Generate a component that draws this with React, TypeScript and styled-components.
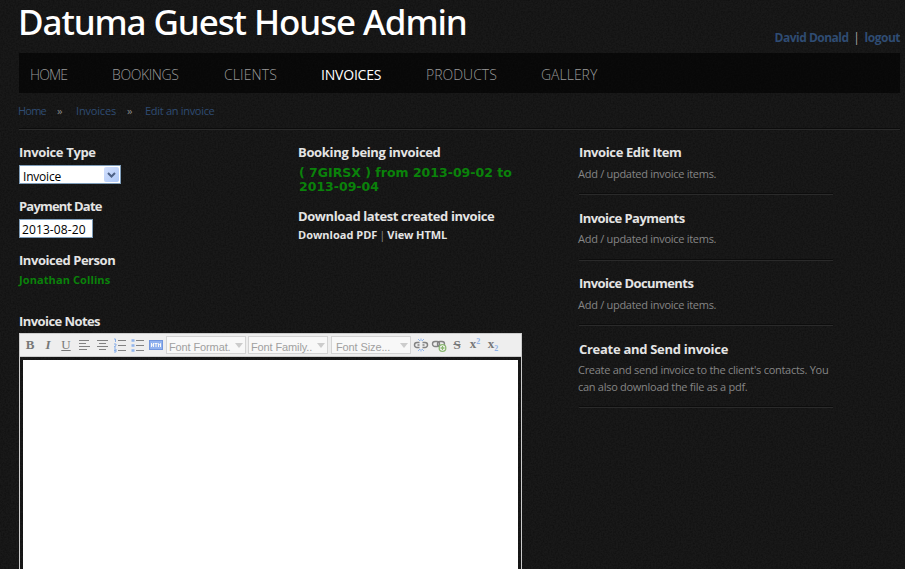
import React from "react";
import styled, { createGlobalStyle } from "styled-components";

const grain = (id: number, alpha: number) =>
  `url("data:image/svg+xml,${encodeURIComponent(
    `<svg xmlns='http://www.w3.org/2000/svg' width='200' height='200'><filter id='n' x='0' y='0' width='100%' height='100%'><feTurbulence type='fractalNoise' baseFrequency='0.6' numOctaves='2' seed='${id}' stitchTiles='stitch'/><feColorMatrix values='0 0 0 0 0  0 0 0 0 0  0 0 0 0 0  1.6 0 0 0 -0.55'/></filter><rect width='200' height='200' filter='url(#n)' opacity='${alpha}'/></svg>`
  )}")`;

const GlobalStyle = createGlobalStyle`
  * { box-sizing: border-box; }
  html, body { margin: 0; height: 100%; overflow: hidden; }
  body {
    background: #191919 ${grain(4, 0.4)};
    color: #888;
    font: 11px/17px "Open Sans", "Noto Sans", sans-serif;
  }
`;

const Page = styled.div`
  width: 881px;
  margin-left: 19px;
`;

const Header = styled.header`
  display: flex;
  justify-content: space-between;
  height: 53px;
`;

const Title = styled.h1`
  margin: 0 0 0 -1px;
  font-family: "Noto Sans", sans-serif;
  font-size: 35px;
  font-weight: 500;
  line-height: 44px;
  letter-spacing: -1.1px;
  color: #fff;
  white-space: nowrap;
`;

const Account = styled.div`
  display: flex;
  padding-top: 28px;
  font-size: 12px;
  line-height: 20px;
`;

const Divider = styled.span`
  width: 16px;
  text-align: center;
  color: #aaa;
`;

const AccountLink = styled.a<{ $ls?: number }>`
  font-weight: bold;
  letter-spacing: ${(p) => p.$ls ?? 0}px;
  color: #2f4c73;
  white-space: nowrap;
`;

const Nav = styled.nav`
  display: grid;
  grid-template-columns: 82px 112px 97px 105px 115px auto;
  height: 40px;
  padding: 4px 0 0 11px;
  background: rgba(0, 0, 0, 0.6);
`;

const NavItem = styled.a<{ $active?: boolean; $ls?: number }>`
  font-size: 14px;
  font-weight: ${(p) => (p.$active ? 400 : 300)};
  line-height: 36px;
  letter-spacing: ${(p) => p.$ls ?? 0}px;
  color: ${(p) => (p.$active ? "#fff" : "#999")};
`;

const Breadcrumb = styled.div`
  display: grid;
  grid-template-columns: 38px 19px 51px 19px auto;
  height: 37px;
  line-height: 35px;
  border-bottom: 1px solid #2a2a2a;
  box-shadow: inset 0 -1px #0c0c0c;
`;

const Crumb = styled.a<{ $ls?: number; $ml?: number }>`
  margin-left: ${(p) => p.$ml ?? 0}px;
  color: #2f4c73;
  letter-spacing: ${(p) => p.$ls ?? 0}px;
  white-space: nowrap;
`;

const Main = styled.main`
  display: grid;
  grid-template-columns: 279px 281px 254px;
  grid-template-rows: 178px auto;
`;

const Column = styled.section`
  padding-top: 13px;
`;

const Heading = styled.h2<{ $ls?: number }>`
  margin: 0;
  font-size: 13px;
  line-height: 18px;
  letter-spacing: ${(p) => p.$ls ?? -0.5}px;
  color: #e4e4e4;
  white-space: nowrap;
`;

const Field = styled.div`
  height: 54px;
`;

const SelectBox = styled.div`
  display: flex;
  justify-content: space-between;
  width: 102px;
  height: 19px;
  margin-top: 4px;
  padding: 1px 1px 1px 3px;
  border: 1px solid #7f9db9;
  background: #fff;
  color: #000;
  font: 12px/19px "Open Sans", sans-serif;
  letter-spacing: -0.2px;
`;

const Arrow = styled.span`
  display: grid;
  place-items: center;
  width: 15px;
  height: 15px;
  border-radius: 2px;
  background: linear-gradient(135deg, #d3e0fd, #aec8f7);
`;

const DateInput = styled.input`
  display: block;
  width: 74px;
  height: 19px;
  margin-top: 4px;
  padding: 2px 0 0 2px;
  border: 1px solid #7f9db9;
  background: #fff;
  color: #000;
  font: 12px/16px "Open Sans", sans-serif;
  letter-spacing: 0.1px;
`;

const Person = styled.div`
  margin-top: 2px;
  font-weight: bold;
  line-height: 18px;
  letter-spacing: 0.1px;
  color: #0a820a;
`;

const Booking = styled.p`
  width: 225px;
  margin: 5px 0 13px 1px;
  font: bold 12.5px/14px "DejaVu Sans", sans-serif;
  color: #0a820a;
`;

const Downloads = styled.div`
  display: flex;
  margin-top: 1px;
`;

const Download = styled.a<{ $ls?: number }>`
  font-weight: bold;
  color: #e4e4e4;
  letter-spacing: ${(p) => p.$ls ?? 0}px;
`;

const Pipe = styled.span`
  width: 10px;
  text-align: center;
`;

const Side = styled.aside`
  grid-column: 3;
  grid-row: 1 / 3;
`;

const Card = styled.section<{ $h: number; $pad: number }>`
  height: ${(p) => p.$h}px;
  padding-top: ${(p) => p.$pad}px;
  border-bottom: 1px solid #2a2a2a;
  box-shadow: inset 0 -1px #0d0d0d;
`;

const CardText = styled.p<{ $gap: number }>`
  margin: ${(p) => p.$gap}px 0 0 -1px;
  letter-spacing: -0.28px;
  color: #858585;
  white-space: nowrap;
`;

const Notes = styled.section`
  grid-column: 1 / 3;
  padding-top: 4px;
`;

const Editor = styled.div`
  width: 503px;
  height: 260px;
  margin-top: 3px;
  border: 1px solid #ccc;
`;

const Toolbar = styled.div`
  display: flex;
  align-items: center;
  height: 23px;
  padding-left: 1px;
  background: #eee;
  border-bottom: 1px solid #ccc;
`;

const Tool = styled.span`
  display: grid;
  place-items: center;
  width: 18px;
  height: 20px;
  svg { display: block; opacity: 0.7; }
`;

const LinkTools = styled.span`
  display: flex;
  margin-left: 1px;
`;

const Dropdown = styled.div<{ $ml: number }>`
  display: flex;
  justify-content: space-between;
  width: 80px;
  height: 18px;
  margin-left: ${(p) => p.$ml}px;
  padding: 0 2px;
  border: 1px solid #d4d4d4;
  background: #f8f8f8;
  color: #a0a0a0;
  font: 11px/20px "Liberation Sans", sans-serif;
  letter-spacing: -0.12px;
  svg { margin-top: 6px; }
`;

const DropdownLabel = styled.span<{ $indent?: number }>`
  padding-left: ${(p) => p.$indent ?? 0}px;
  white-space: nowrap;
`;

const Canvas = styled.div`
  height: 232px;
  margin: 3px 3px 0 3px;
  background: #fff;
`;

const Svg = ({ children }: { children: React.ReactNode }) => (
  <svg width="16" height="16" viewBox="0 0 16 16" fill="none" stroke="#555">
    {children}
  </svg>
);

const Glyph = styled.span<{ $italic?: boolean; $bold?: boolean; $line?: string }>`
  font: ${(p) => (p.$italic ? "italic " : "")}${(p) => (p.$bold ? "bold " : "")}13px/16px "Liberation Serif", serif;
  color: #777;
  text-decoration: ${(p) => p.$line ?? "none"};
`;

const Index = styled.span<{ $up?: boolean }>`
  position: relative;
  top: ${(p) => (p.$up ? -4 : 3)}px;
  font-size: 8px;
  color: #8db1e8;
`;

const Caret = () => (
  <svg width="8" height="5" viewBox="0 0 8 5"><path d="M0 0h8L4 5z" fill="#ccc" /></svg>
);

const cards = [
  { title: "Invoice Edit Item", ls: -0.38, h: 65, pad: 13, gap: 4, lines: ["Add / updated invoice items."] },
  { title: "Invoice Payments", ls: -0.56, h: 66, pad: 14, gap: 3, lines: ["Add / updated invoice items."] },
  { title: "Invoice Documents", ls: -0.57, h: 65, pad: 13, gap: 4, lines: ["Add / updated invoice items."] },
  {
    title: "Create and Send invoice", ls: -0.29, h: 82, pad: 14, gap: 3,
    lines: ["Create and send invoice to the client's contacts. You", "can also download the file as a pdf."],
  },
];

export default function App() {
  return (
    <>
      <GlobalStyle />
      <Page>
        <Header>
          <Title>Datuma Guest House Admin</Title>
          <Account>
            <AccountLink $ls={-0.5}>David Donald</AccountLink>
            <Divider>|</Divider>
            <AccountLink $ls={-0.5}>logout</AccountLink>
          </Account>
        </Header>
        <Nav>
          <NavItem $ls={-0.9}>HOME</NavItem>
          <NavItem $ls={-0.4}>BOOKINGS</NavItem>
          <NavItem $ls={0.1}>CLIENTS</NavItem>
          <NavItem $active $ls={-0.2}>INVOICES</NavItem>
          <NavItem>PRODUCTS</NavItem>
          <NavItem>GALLERY</NavItem>
        </Nav>
        <Breadcrumb>
          <Crumb $ml={-1} $ls={-0.8}>Home</Crumb>
          <span>»</span>
          <Crumb $ls={-0.17}>Invoices</Crumb>
          <span>»</span>
          <Crumb $ml={-1} $ls={-0.3}>Edit an invoice</Crumb>
        </Breadcrumb>
        <Main>
          <Column>
            <Field>
              <Heading $ls={-0.35}>Invoice Type</Heading>
              <SelectBox>
                Invoice
                <Arrow>
                  <svg width="9" height="6" viewBox="0 0 9 6"><path d="M1 1l3.5 3.5L8 1" fill="none" stroke="#4d6185" strokeWidth="2" /></svg>
                </Arrow>
              </SelectBox>
            </Field>
            <Field>
              <Heading $ls={-0.8}>Payment Date</Heading>
              <DateInput defaultValue="2013-08-20" />
            </Field>
            <Field>
              <Heading $ls={-0.45}>Invoiced Person</Heading>
              <Person>Jonathan Collins</Person>
            </Field>
          </Column>
          <Column>
            <Heading $ls={-0.33}>Booking being invoiced</Heading>
            <Booking>( 7GIRSX ) from 2013-09-02 to 2013-09-04</Booking>
            <Heading $ls={-0.4}>Download latest created invoice</Heading>
            <Downloads>
              <Download>Download PDF</Download>
              <Pipe>|</Pipe>
              <Download $ls={-0.1}>View HTML</Download>
            </Downloads>
          </Column>
          <Side>
            {cards.map((c) => (
              <Card key={c.title} $h={c.h} $pad={c.pad}>
                <Heading $ls={c.ls}>{c.title}</Heading>
                <CardText $gap={c.gap}>
                  {c.lines.map((l) => <React.Fragment key={l}>{l}<br /></React.Fragment>)}
                </CardText>
              </Card>
            ))}
          </Side>
          <Notes>
            <Heading $ls={-0.57}>Invoice Notes</Heading>
            <Editor>
              <Toolbar>
                <Tool><Glyph $bold>B</Glyph></Tool>
                <Tool><Glyph $italic $bold>I</Glyph></Tool>
                <Tool><Glyph $line="underline">U</Glyph></Tool>
                <Tool><Svg><path d="M3 3.5h10M3 6.5h7M3 9.5h11M3 12.5h8" /></Svg></Tool>
                <Tool><Svg><path d="M3 3.5h11M5 6.5h7M3 9.5h11M5 12.5h7" /></Svg></Tool>
                <Tool>
                  <Svg>
                    <path d="M6 3.5h8M6 8.5h8M6 13.5h8" />
                    <path d="M2 2h1.5v3M2 7h2v1.5l-2 1.5h2M2 12h2v3h-2M2 13.5h2" stroke="#5c93e6" />
                  </Svg>
                </Tool>
                <Tool>
                  <Svg>
                    <path d="M6 3.5h8M6 8.5h8M6 13.5h8" />
                    <path d="M1.5 3.5h3M1.5 8.5h3M1.5 13.5h3" stroke="#6b9ded" strokeWidth="2.5" />
                  </Svg>
                </Tool>
                <Tool>
                  <Svg>
                    <rect x="1.5" y="3.5" width="13" height="9" fill="#6b9af0" stroke="#3f72d8" />
                    <path d="M3.5 6v4M5.5 6v4M3.5 8h2M6.5 6.5h3M8 6.5V10M10.5 10V6.5l1 1 1-1V10" stroke="#fff" />
                  </Svg>
                </Tool>
                <Dropdown $ml={1}><DropdownLabel>Font Format.</DropdownLabel><Caret /></Dropdown>
                <Dropdown $ml={2}><DropdownLabel>Font Family..</DropdownLabel><Caret /></Dropdown>
                <Dropdown $ml={3}><DropdownLabel $indent={2}>Font Size...</DropdownLabel><Caret /></Dropdown>
                <LinkTools>
                  <Tool>
                    <Svg>
                      <path d="M6.5 5.5H4a2.5 2.5 0 0 0 0 5h2.5M9.5 5.5H12a2.5 2.5 0 0 1 0 5H9.500M4.500 8h2M9.500 8h2" strokeWidth="1.5" />
                      <path d="M5 2l2 2M8 1.5v2.500M11 2L9 4M5 14l2-2M8 14.500V12M11 14l-2-2" stroke="#6b9ded" />
                    </Svg>
                  </Tool>
                  <Tool>
                    <Svg>
                      <rect x="1.5" y="4.5" width="7" height="5" rx="2.5" strokeWidth="1.4" />
                      <rect x="6.5" y="4.5" width="7" height="5" rx="2.5" strokeWidth="1.4" />
                      <circle cx="11.5" cy="11" r="3.3" fill="#fff" stroke="#5f9f3b" strokeWidth="1.3" />
                      <path d="M9.5 11h4M11.5 9v4" stroke="#5f9f3b" strokeWidth="1.3" />
                    </Svg>
                  </Tool>
                </LinkTools>
                <Tool><Glyph $bold $line="line-through">S</Glyph></Tool>
                <Tool><Glyph $bold>x<Index $up>2</Index></Glyph></Tool>
                <Tool><Glyph $bold>x<Index>2</Index></Glyph></Tool>
              </Toolbar>
              <Canvas />
            </Editor>
          </Notes>
        </Main>
      </Page>
    </>
  );
}
